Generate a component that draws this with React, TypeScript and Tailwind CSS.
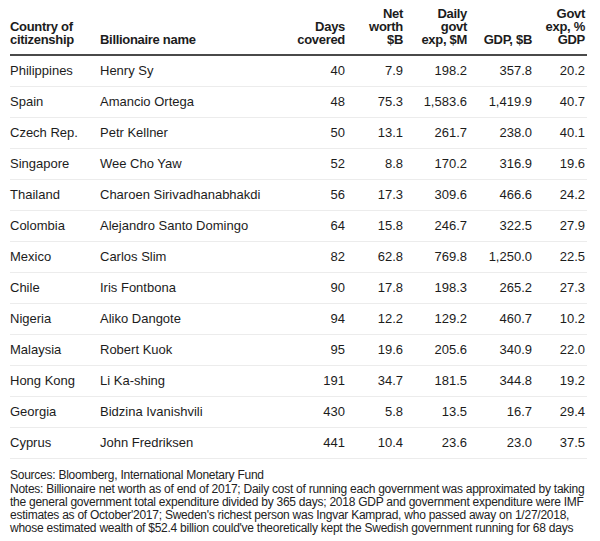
type Row = {
  country: string;
  name: string;
  days: string;
  worth: string;
  daily: string;
  gdp: string;
  pct: string;
};

const rows: Row[] = [
  { country: "Philippines", name: "Henry Sy", days: "40", worth: "7.9", daily: "198.2", gdp: "357.8", pct: "20.2" },
  { country: "Spain", name: "Amancio Ortega", days: "48", worth: "75.3", daily: "1,583.6", gdp: "1,419.9", pct: "40.7" },
  { country: "Czech Rep.", name: "Petr Kellner", days: "50", worth: "13.1", daily: "261.7", gdp: "238.0", pct: "40.1" },
  { country: "Singapore", name: "Wee Cho Yaw", days: "52", worth: "8.8", daily: "170.2", gdp: "316.9", pct: "19.6" },
  { country: "Thailand", name: "Charoen Sirivadhanabhakdi", days: "56", worth: "17.3", daily: "309.6", gdp: "466.6", pct: "24.2" },
  { country: "Colombia", name: "Alejandro Santo Domingo", days: "64", worth: "15.8", daily: "246.7", gdp: "322.5", pct: "27.9" },
  { country: "Mexico", name: "Carlos Slim", days: "82", worth: "62.8", daily: "769.8", gdp: "1,250.0", pct: "22.5" },
  { country: "Chile", name: "Iris Fontbona", days: "90", worth: "17.8", daily: "198.3", gdp: "265.2", pct: "27.3" },
  { country: "Nigeria", name: "Aliko Dangote", days: "94", worth: "12.2", daily: "129.2", gdp: "460.7", pct: "10.2" },
  { country: "Malaysia", name: "Robert Kuok", days: "95", worth: "19.6", daily: "205.6", gdp: "340.9", pct: "22.0" },
  { country: "Hong Kong", name: "Li Ka-shing", days: "191", worth: "34.7", daily: "181.5", gdp: "344.8", pct: "19.2" },
  { country: "Georgia", name: "Bidzina Ivanishvili", days: "430", worth: "5.8", daily: "13.5", gdp: "16.7", pct: "29.4" },
  { country: "Cyprus", name: "John Fredriksen", days: "441", worth: "10.4", daily: "23.6", gdp: "23.0", pct: "37.5" },
];

const cols = "grid grid-cols-[90px_195px_50px_58px_64px_65px_53px]";

export default function App() {
  return (
    <div className="min-h-[541px] w-[600px] bg-white font-['Liberation_Sans',Arial,sans-serif] text-[#1c1c1c]">
      <div className="ml-[10px] w-[577px]">
        <div
          className={`${cols} items-end border-b-2 border-[#4a4a4a] pb-[8px] pt-[7px] pr-[2px] text-[13px] font-bold leading-[13px] tracking-[-0.3px]`}
        >
          <div>
            Country of
            <br />
            citizenship
          </div>
          <div>Billionaire name</div>
          <div className="text-right">
            Days
            <br />
            covered
          </div>
          <div className="text-right">
            Net
            <br />
            worth
            <br />
            $B
          </div>
          <div className="text-right">
            Daily
            <br />
            govt
            <br />
            exp, $M
          </div>
          <div className="text-right">GDP, $B</div>
          <div className="text-right">
            Govt
            <br />
            exp, %
            <br />
            GDP
          </div>
        </div>

        {rows.map((r) => (
          <div
            key={r.country}
            className={`${cols} h-[31px] items-center border-b border-[#ececec] pr-[2px] text-[13px]`}
          >
            <div>{r.country}</div>
            <div>{r.name}</div>
            <div className="text-right">{r.days}</div>
            <div className="text-right">{r.worth}</div>
            <div className="text-right">{r.daily}</div>
            <div className="text-right">{r.gdp}</div>
            <div className="text-right">{r.pct}</div>
          </div>
        ))}
      </div>

      <div className="ml-[10px] mt-[10px] text-[12px] leading-[13px] tracking-[-0.25px] text-[#222]">
        <p className="whitespace-nowrap">Sources: Bloomberg, International Monetary Fund</p>
        <p className="mt-[1px] whitespace-nowrap">
          Notes: Billionaire net worth as of end of 2017; Daily cost of running each government was approximated by taking
          <br />
          the general government total expenditure divided by 365 days; 2018 GDP and government expenditure were IMF
          <br />
          estimates as of October'2017; Sweden's richest person was Ingvar Kamprad, who passed away on 1/27/2018,
          <br />
          whose estimated wealth of $52.4 billion could've theoretically kept the Swedish government running for 68 days
        </p>
      </div>
    </div>
  );
}
